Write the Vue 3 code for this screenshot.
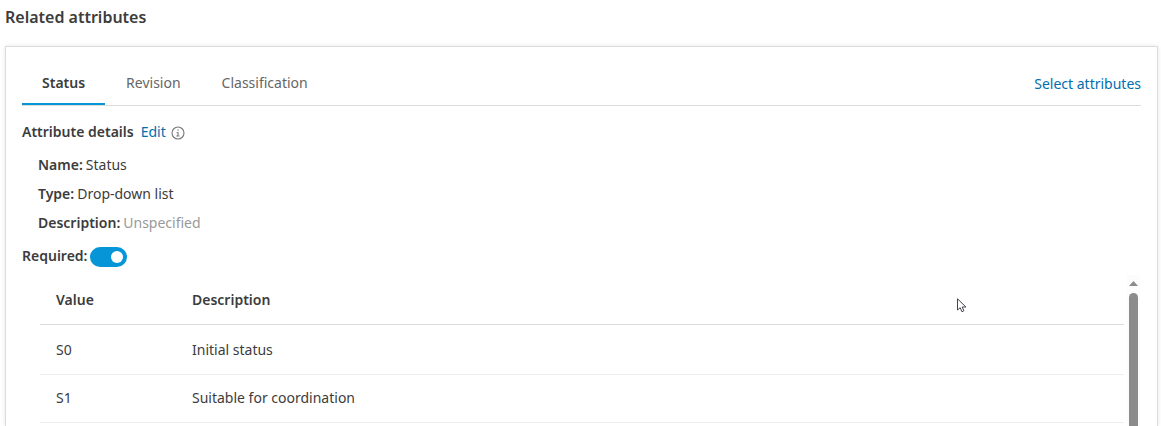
<script setup>
import { ref } from 'vue'

const tabs = ['Status', 'Revision', 'Classification']
const active = ref('Status')
const required = ref(true)
const details = [
  { label: 'Name:', value: 'Status' },
  { label: 'Type:', value: 'Drop-down list' },
  { label: 'Description:', value: 'Unspecified', muted: true },
]
const rows = [
  { value: 'S0', description: 'Initial status' },
  { value: 'S1', description: 'Suitable for coordination' },
]
</script>

<template>
  <main class="page">
    <h1 class="title">Related attributes</h1>
    <section class="card">
      <div class="tabbar">
        <div class="tabs" role="tablist">
          <button
            v-for="tab in tabs"
            :key="tab"
            type="button"
            role="tab"
            class="tab"
            :class="{ active: tab === active }"
            :aria-selected="tab === active"
            @click="active = tab"
          >{{ tab }}</button>
        </div>
        <a href="#" class="link select">Select attributes</a>
      </div>

      <div class="details-head">
        <h2 class="subtitle">Attribute details</h2>
        <a href="#" class="link">Edit</a>
        <svg class="info" viewBox="0 0 14 14" aria-hidden="true">
          <circle cx="7" cy="7" r="6" fill="none" stroke="#777" stroke-width="1.1" />
          <path d="M6.4 3.4h1.3v1.3H6.4zM5.4 5.9h2.2v3.7h1v.9H5.3v-.9h1.1V6.8h-1z" fill="#808080" />
        </svg>
      </div>

      <dl class="details">
        <div v-for="item in details" :key="item.label" class="detail">
          <dt>{{ item.label }}</dt>
          <dd :class="{ muted: item.muted }">{{ item.value }}</dd>
        </div>
      </dl>

      <div class="required">
        <label for="required">Required:</label>
        <input id="required" v-model="required" type="checkbox" role="switch" class="toggle" />
      </div>

      <div class="list">
        <table class="table">
          <thead>
            <tr>
              <th class="value-col" scope="col">Value</th>
              <th scope="col">Description</th>
            </tr>
          </thead>
          <tbody>
            <tr v-for="row in rows" :key="row.value">
              <td>{{ row.value }}</td>
              <td>{{ row.description }}</td>
            </tr>
          </tbody>
        </table>
        <div class="scrollbar" aria-hidden="true">
          <svg class="arrow" viewBox="0 0 9 5"><path d="M0 5L4.5 0L9 5z" fill="#8b8b8b" /></svg>
          <div class="thumb"></div>
        </div>
      </div>
    </section>

    <svg class="cursor" viewBox="0 0 10 15" aria-hidden="true">
      <path d="M.5 .8V12L3.2 9.7L4.9 13.7L6.9 12.8L5.2 9H8.9z" fill="#fff" stroke="#44444c" stroke-width="1" />
    </svg>
  </main>
</template>

<style>
body {
  margin: 0;
  background: #fff;
}
</style>

<style scoped>
.page {
  position: relative;
  box-sizing: border-box;
  display: flex;
  flex-direction: column;
  height: 100vh;
  overflow: hidden;
  padding: 0 3px 0 5px;
  font-family: "Noto Sans", "Open Sans", sans-serif;
  font-size: 14px;
  line-height: 20px;
  color: #3c3c3c;
}
.title {
  margin: 6px 0 18px;
  font-size: 16px;
  line-height: 22px;
  font-weight: 600;
}
.card {
  flex: 1;
  display: flex;
  flex-direction: column;
  padding: 0 16px;
  border: 1px solid #dcdcdc;
  border-bottom: 0;
  box-shadow: 0 0 4px rgba(0, 0, 0, 0.1);
}
.tabbar {
  display: flex;
  justify-content: space-between;
  align-items: flex-end;
  margin-top: 16px;
  border-bottom: 1px solid #dcdcdc;
}
.tabs {
  display: flex;
  gap: 1px;
}
.tab {
  height: 42px;
  padding: 0 20px;
  border: 0;
  border-bottom: 2px solid transparent;
  background: none;
  font: inherit;
  color: #666;
}
.tab.active {
  border-color: #0696d7;
  font-weight: 600;
  color: #3c3c3c;
}
.link {
  color: #006eaf;
  text-decoration: none;
}
.select {
  margin-bottom: 11px;
}
.details-head {
  display: flex;
  align-items: center;
  margin-top: 16px;
}
.subtitle {
  margin: 0 7px 0 0;
  font-size: 14px;
  line-height: 20px;
  font-weight: 600;
}
.info {
  width: 14px;
  height: 14px;
  margin: 2px 0 0 5px;
}
.details {
  display: flex;
  flex-direction: column;
  gap: 9px;
  margin: 13px 0 0 16px;
}
.detail {
  display: flex;
  gap: 3px;
}
dt {
  font-weight: 600;
}
dd {
  margin: 0;
}
.muted {
  color: #999;
}
.required {
  display: flex;
  align-items: center;
  gap: 3px;
  margin-top: 12px;
  font-weight: 600;
}
.toggle {
  appearance: none;
  display: flex;
  align-items: center;
  box-sizing: border-box;
  width: 37px;
  height: 20px;
  margin: 2px 0 0;
  padding: 0 4px;
  border-radius: 10px;
  background: #999;
}
.toggle::before {
  content: "";
  width: 12px;
  height: 12px;
  border-radius: 50%;
  background: #fff;
}
.toggle:checked {
  justify-content: flex-end;
  background: #0696d7;
}
.list {
  flex: 1;
  display: flex;
  align-items: stretch;
  gap: 3px;
  margin: 8px 0 0 18px;
}
.table {
  flex: 1;
  align-self: flex-start;
  border-collapse: separate;
  border-spacing: 0;
  table-layout: fixed;
}
th,
td {
  box-sizing: border-box;
  height: 48px;
  padding: 0 16px 1px;
  text-align: left;
  border-bottom: 1px solid #eee;
}
th {
  height: 50px;
  padding-bottom: 0;
  font-weight: 600;
  border-color: #dcdcdc;
}
.value-col {
  width: 136px;
}
tbody tr:first-child td {
  height: 50px;
  padding-bottom: 0;
}
.scrollbar {
  display: flex;
  flex-direction: column;
  align-items: center;
  width: 13px;
  margin-right: 1px;
  background: #fcfcfc;
}
.arrow {
  width: 9px;
  height: 5px;
  margin: 6px 0 7px;
}
.thumb {
  flex: 1;
  width: 9px;
  border-radius: 5px 5px 0 0;
  background: #8b8b8b;
}
.cursor {
  position: absolute;
  left: 957px;
  top: 298px;
  width: 10px;
  height: 15px;
}
</style>
